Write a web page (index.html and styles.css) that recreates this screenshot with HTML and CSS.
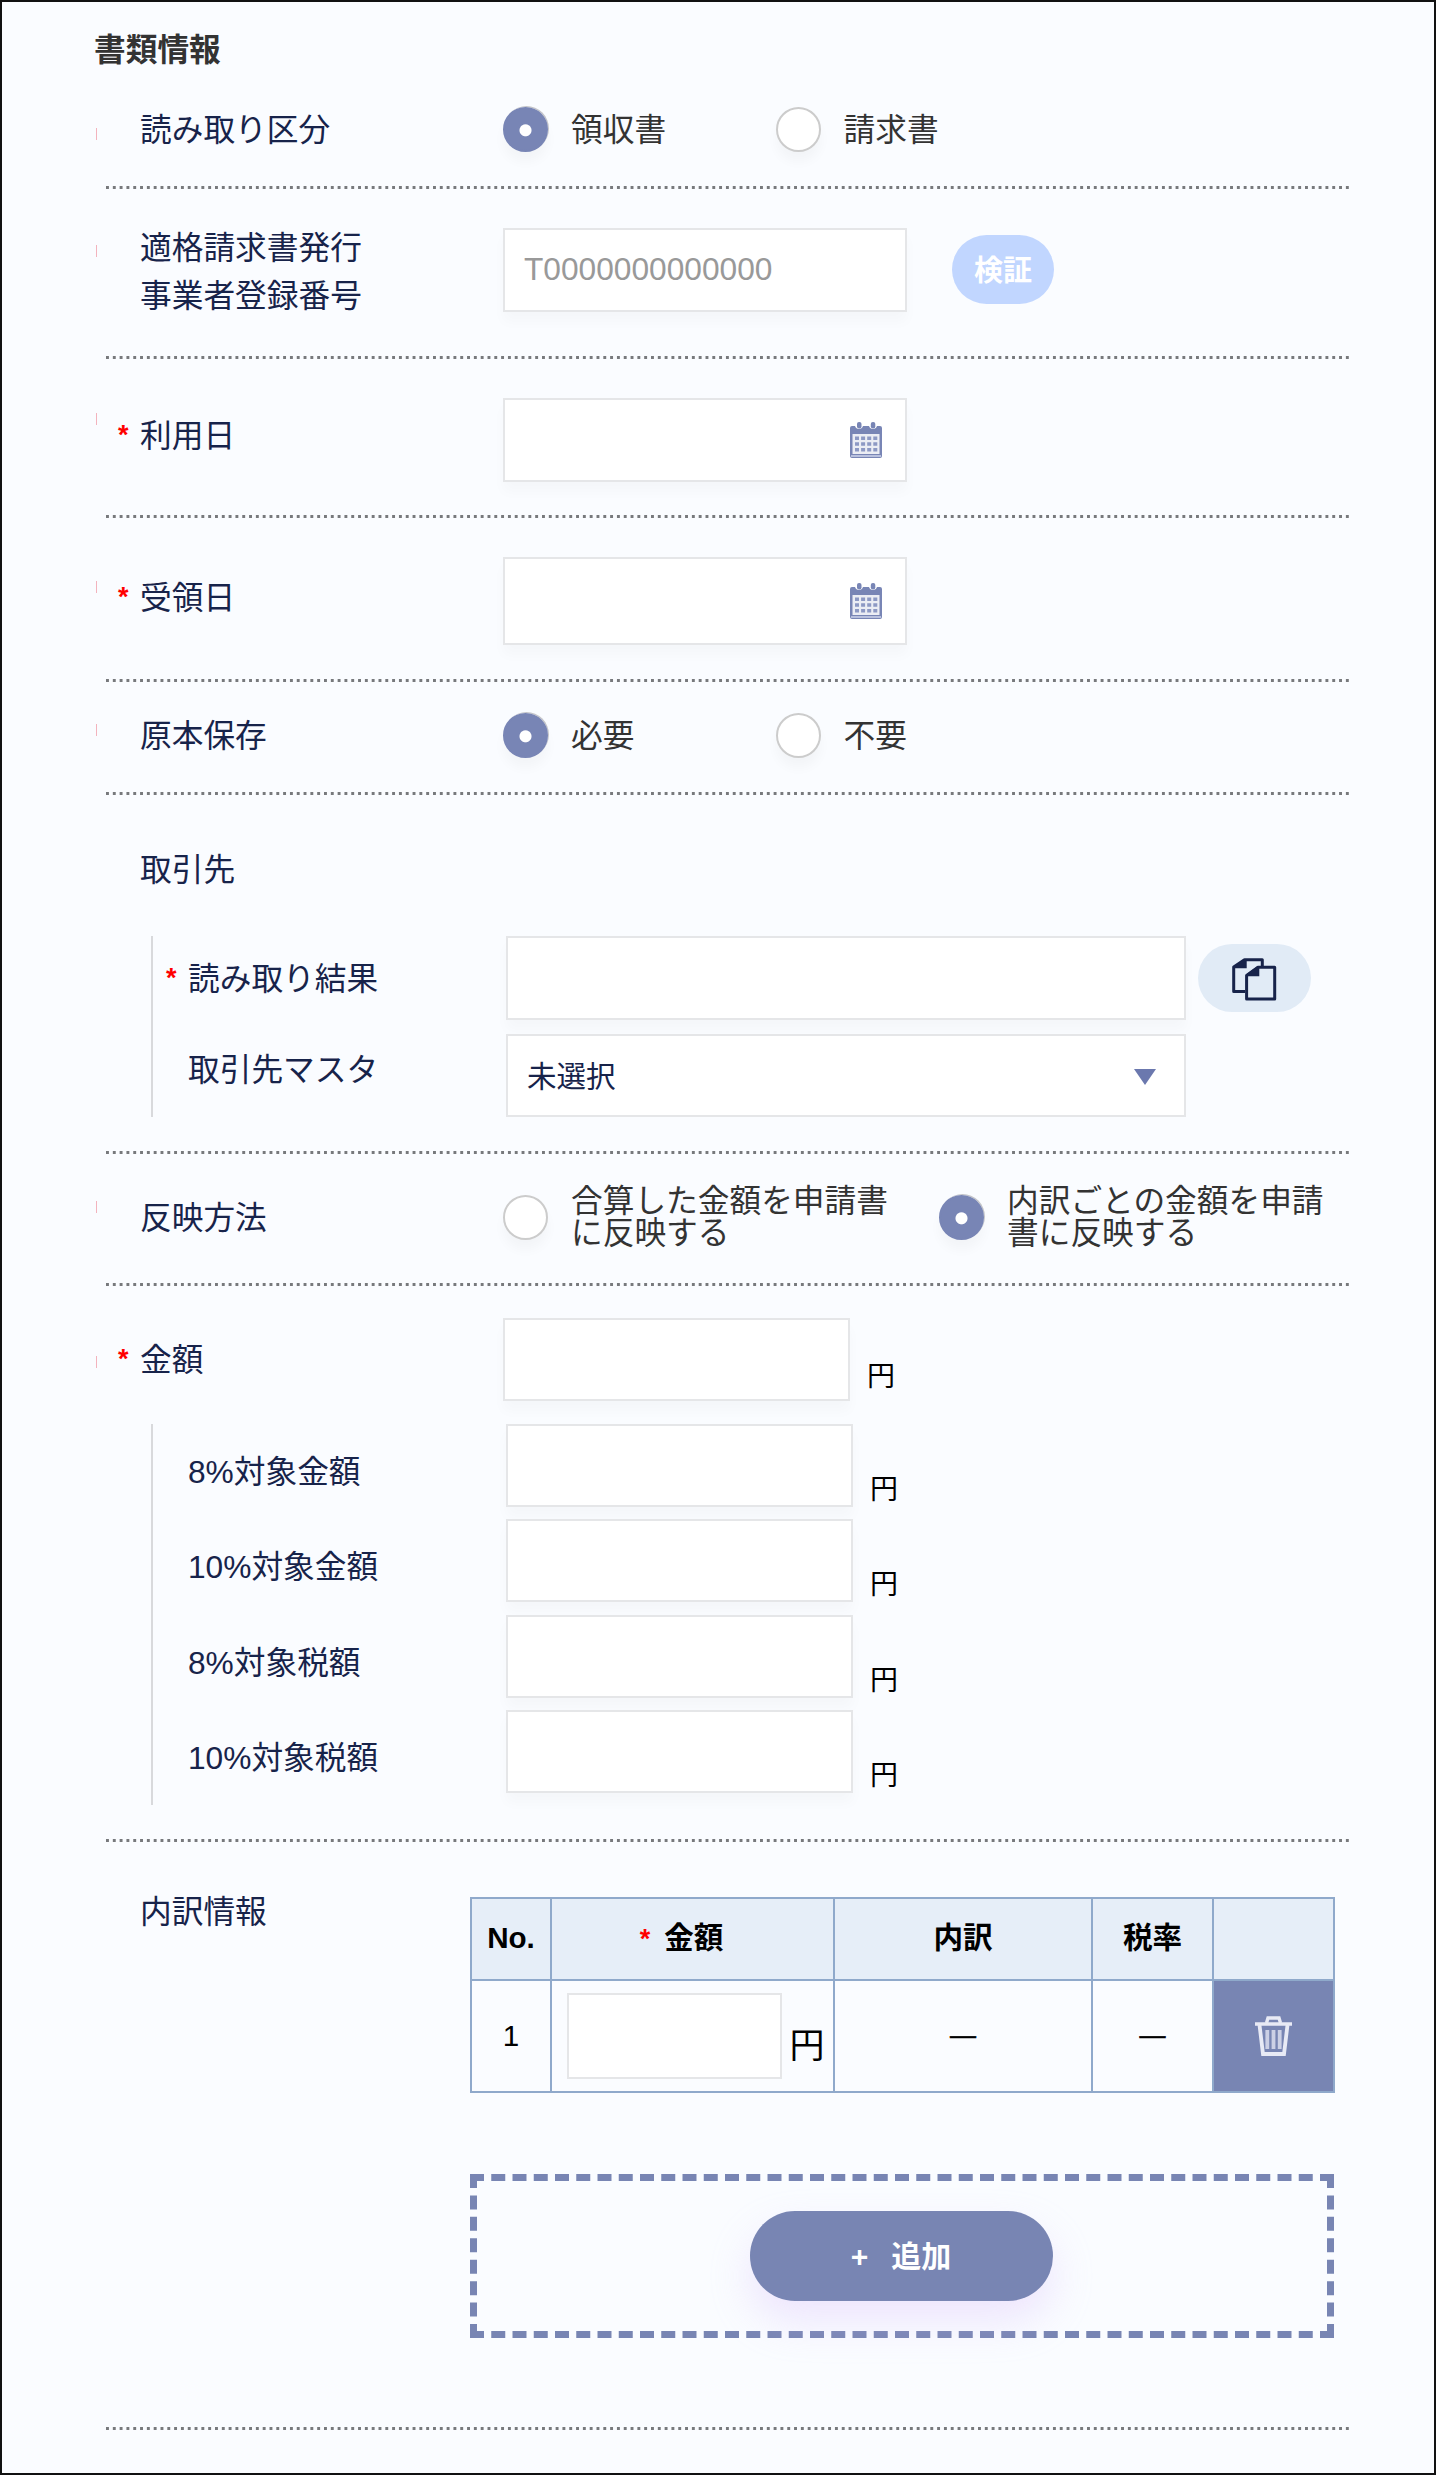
FILE: index.html
```html
<!DOCTYPE html>
<html lang="ja">
<head>
    <meta charset="UTF-8">
    <meta name="viewport" content="width=device-width, initial-scale=1.0">
    <title>書類情報</title>
    <link rel="stylesheet" href="styles.css">
</head>
<body>

    <form class="document-form">
        <h2 class="form-title">書類情報</h2>

        <div class="row row-type has-mark">
            <div class="label"><span class="required"></span>読み取り区分</div>
            <div class="radio-group">
                <label class="radio"><span class="radio-icon checked"></span>領収書</label>
                <label class="radio"><span class="radio-icon"></span>請求書</label>
            </div>
        </div>

        <div class="row row-number has-mark">
            <div class="label"><span class="required"></span><span>適格請求書発行<br>事業者登録番号</span></div>
            <div class="control">
                <input type="text" class="input input-medium" placeholder="T0000000000000">
                <button type="button" class="verify-button">検証</button>
            </div>
        </div>

        <div class="row row-used has-mark">
            <div class="label"><span class="required">*</span>利用日</div>
            <div class="control">
                <div class="input input-medium date-input">
                    <svg class="calendar-icon" viewBox="0 0 32 37">
                        <path fill="#7885b5" d="M2 5H5C6 9 12 9 13 5H19C20 9 26 9 27 5H30Q32 5 32 7V35Q32 37 30 37H2Q0 37 0 35V7Q0 5 2 5Z"/>
                        <path fill="#fff" fill-opacity=".85" d="M2.5 13H29.5V33H2.5Z"/>
                        <path fill="#b9c1de" d="M1 34H31V36H1Z"/>
                        <rect fill="#7885b5" x="7" y="1" width="4.5" height="6.5" rx="2"/>
                        <rect fill="#7885b5" x="20.8" y="1" width="4.5" height="6.5" rx="2"/>
                        <path stroke="#8d99c4" stroke-width="3.4" stroke-dasharray="4 2.1" d="M5 17.2H27.5M5 23H27.5M5 28.8H27.5"/>
                    </svg>
                </div>
            </div>
        </div>

        <div class="row row-received has-mark">
            <div class="label"><span class="required">*</span>受領日</div>
            <div class="control">
                <div class="input input-medium date-input">
                    <svg class="calendar-icon" viewBox="0 0 32 37">
                        <path fill="#7885b5" d="M2 5H5C6 9 12 9 13 5H19C20 9 26 9 27 5H30Q32 5 32 7V35Q32 37 30 37H2Q0 37 0 35V7Q0 5 2 5Z"/>
                        <path fill="#fff" fill-opacity=".85" d="M2.5 13H29.5V33H2.5Z"/>
                        <path fill="#b9c1de" d="M1 34H31V36H1Z"/>
                        <rect fill="#7885b5" x="7" y="1" width="4.5" height="6.5" rx="2"/>
                        <rect fill="#7885b5" x="20.8" y="1" width="4.5" height="6.5" rx="2"/>
                        <path stroke="#8d99c4" stroke-width="3.4" stroke-dasharray="4 2.1" d="M5 17.2H27.5M5 23H27.5M5 28.8H27.5"/>
                    </svg>
                </div>
            </div>
        </div>

        <div class="row row-original has-mark">
            <div class="label"><span class="required"></span>原本保存</div>
            <div class="radio-group">
                <label class="radio"><span class="radio-icon checked"></span>必要</label>
                <label class="radio"><span class="radio-icon"></span>不要</label>
            </div>
        </div>

        <div class="row row-partner">
            <div class="label"><span class="required"></span>取引先</div>
            <div class="sub-group">
                <div class="sub-row">
                    <div class="label"><span class="required">*</span>読み取り結果</div>
                    <input type="text" class="input input-wide">
                    <button type="button" class="copy-button">
                        <svg class="copy-icon" viewBox="0 0 45 43">
                            <g fill="none" stroke="#17234a" stroke-width="3" stroke-linejoin="round">
                                <path d="M13 33.5H1.7V9L12.5 1.7H30.3V8"/>
                                <path d="M26 9.2H42.7V41H14.6V17.5Z"/>
                            </g>
                            <path fill="#17234a" d="M14.7 1V10.3H1.5V8.5L12 1ZM27.3 8.5V18.3H14V16.5L25 8.5Z"/>
                        </svg>
                    </button>
                </div>
                <div class="sub-row">
                    <div class="label"><span class="required"></span>取引先マスタ</div>
                    <div class="input input-wide select">
                        <span>未選択</span>
                        <svg class="arrow-icon" viewBox="0 0 22 16"><path fill="#6b78ae" d="M0 0H22L11 16Z"/></svg>
                    </div>
                </div>
            </div>
        </div>

        <div class="row row-method has-mark">
            <div class="label"><span class="required"></span>反映方法</div>
            <div class="radio-group">
                <label class="radio"><span class="radio-icon"></span><span class="radio-text">合算した金額を申請書<br>に反映する</span></label>
                <label class="radio"><span class="radio-icon checked"></span><span class="radio-text">内訳ごとの金額を申請<br>書に反映する</span></label>
            </div>
        </div>

        <div class="row row-amount has-mark">
            <div class="label"><span class="required">*</span>金額</div>
            <div class="control">
                <input type="text" class="input input-small">
                <span class="yen">円</span>
            </div>
            <div class="sub-group">
                <div class="sub-row">
                    <div class="label"><span class="required"></span>8%対象金額</div>
                    <input type="text" class="input input-small">
                    <span class="yen">円</span>
                </div>
                <div class="sub-row">
                    <div class="label"><span class="required"></span>10%対象金額</div>
                    <input type="text" class="input input-small">
                    <span class="yen">円</span>
                </div>
                <div class="sub-row">
                    <div class="label"><span class="required"></span>8%対象税額</div>
                    <input type="text" class="input input-small">
                    <span class="yen">円</span>
                </div>
                <div class="sub-row">
                    <div class="label"><span class="required"></span>10%対象税額</div>
                    <input type="text" class="input input-small">
                    <span class="yen">円</span>
                </div>
            </div>
        </div>

        <div class="row row-detail">
            <div class="label"><span class="required"></span>内訳情報</div>
            <div class="detail">
                <table class="detail-table">
                    <colgroup>
                        <col class="col-no">
                        <col class="col-amount">
                        <col class="col-item">
                        <col class="col-rate">
                        <col class="col-delete">
                    </colgroup>
                    <tr>
                        <th>No.</th>
                        <th class="amount-head"><span class="required">*</span>金額</th>
                        <th>内訳</th>
                        <th>税率</th>
                        <th></th>
                    </tr>
                    <tr>
                        <td>1</td>
                        <td>
                            <div class="cell-amount">
                                <input type="text" class="input">
                                <span class="yen">円</span>
                            </div>
                        </td>
                        <td class="dash">—</td>
                        <td class="dash">—</td>
                        <td class="delete-cell">
                            <svg class="trash-icon" viewBox="0 0 37 40">
                                <g fill="none" stroke="#e8eaf5">
                                    <path stroke-width="3.4" d="M0 8H37"/>
                                    <path stroke-width="3.4" d="M11.5 7L13 2H24L25.5 7"/>
                                    <path stroke-width="3.8" d="M4.5 9L8 38H29L32.5 9"/>
                                    <path stroke-width="3.8" stroke-opacity=".75" d="M12.3 14V33M18.5 14V33M24.7 14V33"/>
                                </g>
                            </svg>
                        </td>
                    </tr>
                </table>
                <div class="add-area">
                    <button type="button" class="add-button"><span>+</span>追加</button>
                </div>
            </div>
        </div>
    </form>

</body>
</html>
```
FILE: styles.css
```css
/* General Styles */
* {
    margin: 0;
    padding: 0;
    box-sizing: border-box;
}

body {
    font-family: "Liberation Sans", "Noto Sans CJK JP", sans-serif;
    font-size: 31.7px;
    color: #17234a;
}

input, button {
    font-family: inherit;
    font-size: inherit;
}

.document-form {
    height: 2475px;
    padding: 24px 83px 0 94px;
    background-color: #fafcff;
    border: 2px solid #111;
    overflow: hidden;
}

.form-title {
    height: 46px;
    line-height: 48px;
    font-size: 31.7px;
    color: #333;
    margin-left: -2px;
}

/* Rows */
.row {
    position: relative;
    display: flex;
    flex-wrap: wrap;
    align-items: flex-start;
    align-content: flex-start;
    margin-left: 10px;
    background: linear-gradient(to right, #77797c 2.6px, transparent 2.6px) left bottom / 6.82px 2.6px repeat-x;
}

.has-mark::before {
    content: "";
    position: absolute;
    left: -10px;
    top: 56px;
    width: 1px;
    height: 12px;
    background-color: #f3b3bd;
}

.label {
    display: flex;
    width: 397px;
    padding-left: 12px;
    line-height: 48px;
    white-space: nowrap;
}

.required {
    width: 22px;
    flex-shrink: 0;
    line-height: 46px;
    font-size: 27px;
    font-weight: bold;
    color: #f00;
}

.control {
    display: flex;
}

.row-type {
    height: 117px;
    padding-top: 34px;
}

.row-number {
    height: 170px;
    padding-top: 35px;
}

.row-number .control {
    padding-top: 4px;
}

.row-used {
    height: 159px;
    padding-top: 39px;
}

.row-used .label {
    padding-top: 14px;
}

.row-received {
    height: 164px;
    padding-top: 39px;
}

.row-received .label {
    padding-top: 17px;
}

.row-received .input {
    height: 88px;
}

.row-original {
    height: 113px;
    padding-top: 30px;
}

.row-partner {
    height: 359px;
    padding-top: 51px;
}

.row-method {
    height: 132px;
    padding-top: 40px;
    flex-wrap: nowrap;
}

.row-amount {
    height: 556px;
    padding-top: 32px;
}

.row-amount > .label {
    padding-top: 18px;
}

.row-detail {
    height: 588px;
    padding-top: 46px;
}

.row-used::before {
    top: 54px;
}

.row-received::before {
    top: 63px;
}

.row-original::before {
    top: 42px;
}

.row-method::before {
    top: 47px;
}

.row-amount::before {
    top: 70px;
}

/* Inputs */
.input {
    display: block;
    height: 84px;
    padding: 0 19px 2px;
    background-color: #fff;
    border: 2px solid #e5e6e8;
    border-radius: 0;
    outline: none;
    box-shadow: 0 10px 12px rgba(0, 0, 0, 0.025);
}

.input::placeholder {
    color: #999;
}

.input-medium {
    width: 404px;
}

.input-wide {
    width: 680px;
}

.input-small {
    width: 347px;
    height: 83px;
}

.date-input {
    display: flex;
    justify-content: flex-end;
    align-items: center;
    padding-right: 23px;
}

.calendar-icon {
    width: 32px;
    height: 37px;
}

.verify-button {
    width: 102px;
    height: 69px;
    margin: 7px 0 0 45px;
    padding-bottom: 4px;
    border: none;
    border-radius: 35px;
    background-color: #c1d6ff;
    color: #fff;
    font-size: 29px;
    font-weight: bold;
}

.yen {
    width: 28px;
    margin: 43px 0 0 17px;
    line-height: 32px;
    font-size: 28px;
    color: #000;
}

/* Radio buttons */
.radio-group {
    display: flex;
    height: 48px;
    flex-shrink: 0;
    color: #333;
}

.radio {
    display: flex;
    width: 272.5px;
    line-height: 48px;
    white-space: nowrap;
}

.radio-icon {
    width: 45px;
    height: 45px;
    margin: 1px 23px 0 0;
    flex-shrink: 0;
    border: 2px solid #ccc;
    border-radius: 50%;
    background-color: #fff;
    box-shadow: 0 10px 12px rgba(0, 0, 0, 0.03);
}

.radio-icon.checked {
    border-color: #7885b5;
    background: radial-gradient(circle at 50% 52%, #fff 5.5px, #7885b5 6.5px);
    box-shadow: 1px -1px 0 #c4c5c9, 0 10px 12px rgba(0, 0, 0, 0.03);
}

.row-method .label {
    flex-shrink: 0;
}

.row-method .radio {
    width: 436px;
}

.radio-text {
    margin-top: -8px;
    line-height: 31.6px;
}

/* Nested rows */
.sub-group {
    display: flex;
    flex-direction: column;
    width: 1200px;
    margin-left: 45px;
    border-left: 2px solid #d8d9dc;
}

.sub-row {
    display: flex;
    align-items: flex-start;
}

.sub-row .label {
    width: 353px;
    padding-left: 13px;
}

.row-partner .sub-group {
    gap: 14px;
    margin-top: 42px;
}

.row-partner .sub-row .label {
    padding-top: 19px;
}

.row-partner .sub-row + .sub-row .label {
    padding-top: 12px;
}

.row-partner .input {
    height: 83.5px;
}

.row-amount .sub-group {
    gap: 12.4px;
    margin-top: 23px;
    padding-bottom: 12px;
}

.row-amount .sub-row .label {
    padding-top: 24px;
}

.sub-row .yen {
    margin-top: 50px;
}

.select {
    display: flex;
    justify-content: space-between;
    align-items: center;
    padding-right: 28px;
    font-size: 29.5px;
    box-shadow: none;
}

.arrow-icon {
    width: 22px;
    height: 16px;
    margin-top: 6px;
}

.copy-button {
    display: flex;
    justify-content: center;
    align-items: center;
    width: 113px;
    height: 68px;
    margin: 8px 0 0 12px;
    padding-top: 3px;
    border: none;
    border-radius: 34px;
    background-color: #e1ebf6;
}

.copy-icon {
    width: 45px;
    height: 43px;
}

/* Detail table */
.row-detail .detail {
    margin: 9px 0 0 -33px;
}

.detail-table {
    width: 865px;
    table-layout: fixed;
    border-collapse: collapse;
    font-size: 29.6px;
    color: #000;
    text-align: center;
}

.col-no {
    width: 80px;
}

.col-amount {
    width: 283px;
}

.col-item {
    width: 258px;
}

.col-rate {
    width: 121px;
}

.detail-table th,
.detail-table td {
    border: 2px solid #8fa9cb;
}

.detail-table th {
    height: 82px;
    padding-bottom: 3px;
    line-height: 44px;
    background-color: #e6eef8;
}

.detail-table .amount-head {
    padding-right: 22px;
}

.detail-table .required {
    margin-right: 14px;
    line-height: 30px;
}

.detail-table td {
    height: 112px;
}

.detail-table .dash {
    padding-bottom: 2px;
    font-size: 26px;
    -webkit-text-stroke: 0.5px #000;
}

.detail-table .delete-cell {
    background-color: #7885b3;
}

.trash-icon {
    display: block;
    width: 37px;
    height: 40px;
    margin: 0 auto;
}

.cell-amount {
    display: flex;
    padding-left: 15px;
}

.cell-amount .input {
    width: 215px;
    height: 86px;
    box-shadow: none;
}

.cell-amount .yen {
    width: 36px;
    margin: 37px 0 0 7px;
    font-size: 35px;
}

.add-area {
    display: flex;
    justify-content: center;
    width: 864px;
    height: 164px;
    margin-top: 81px;
    padding: 30px 2px 0 0;
    border: 7px dashed #7885b3;
}

.add-button {
    width: 303px;
    height: 90px;
    padding-bottom: 4px;
    border: none;
    border-radius: 45px;
    background-color: #7885b3;
    box-shadow: 0 20px 40px rgba(210, 180, 250, 0.3);
    color: #fff;
    font-size: 30px;
    font-weight: bold;
}

.add-button span {
    margin-right: 23px;
}
```
